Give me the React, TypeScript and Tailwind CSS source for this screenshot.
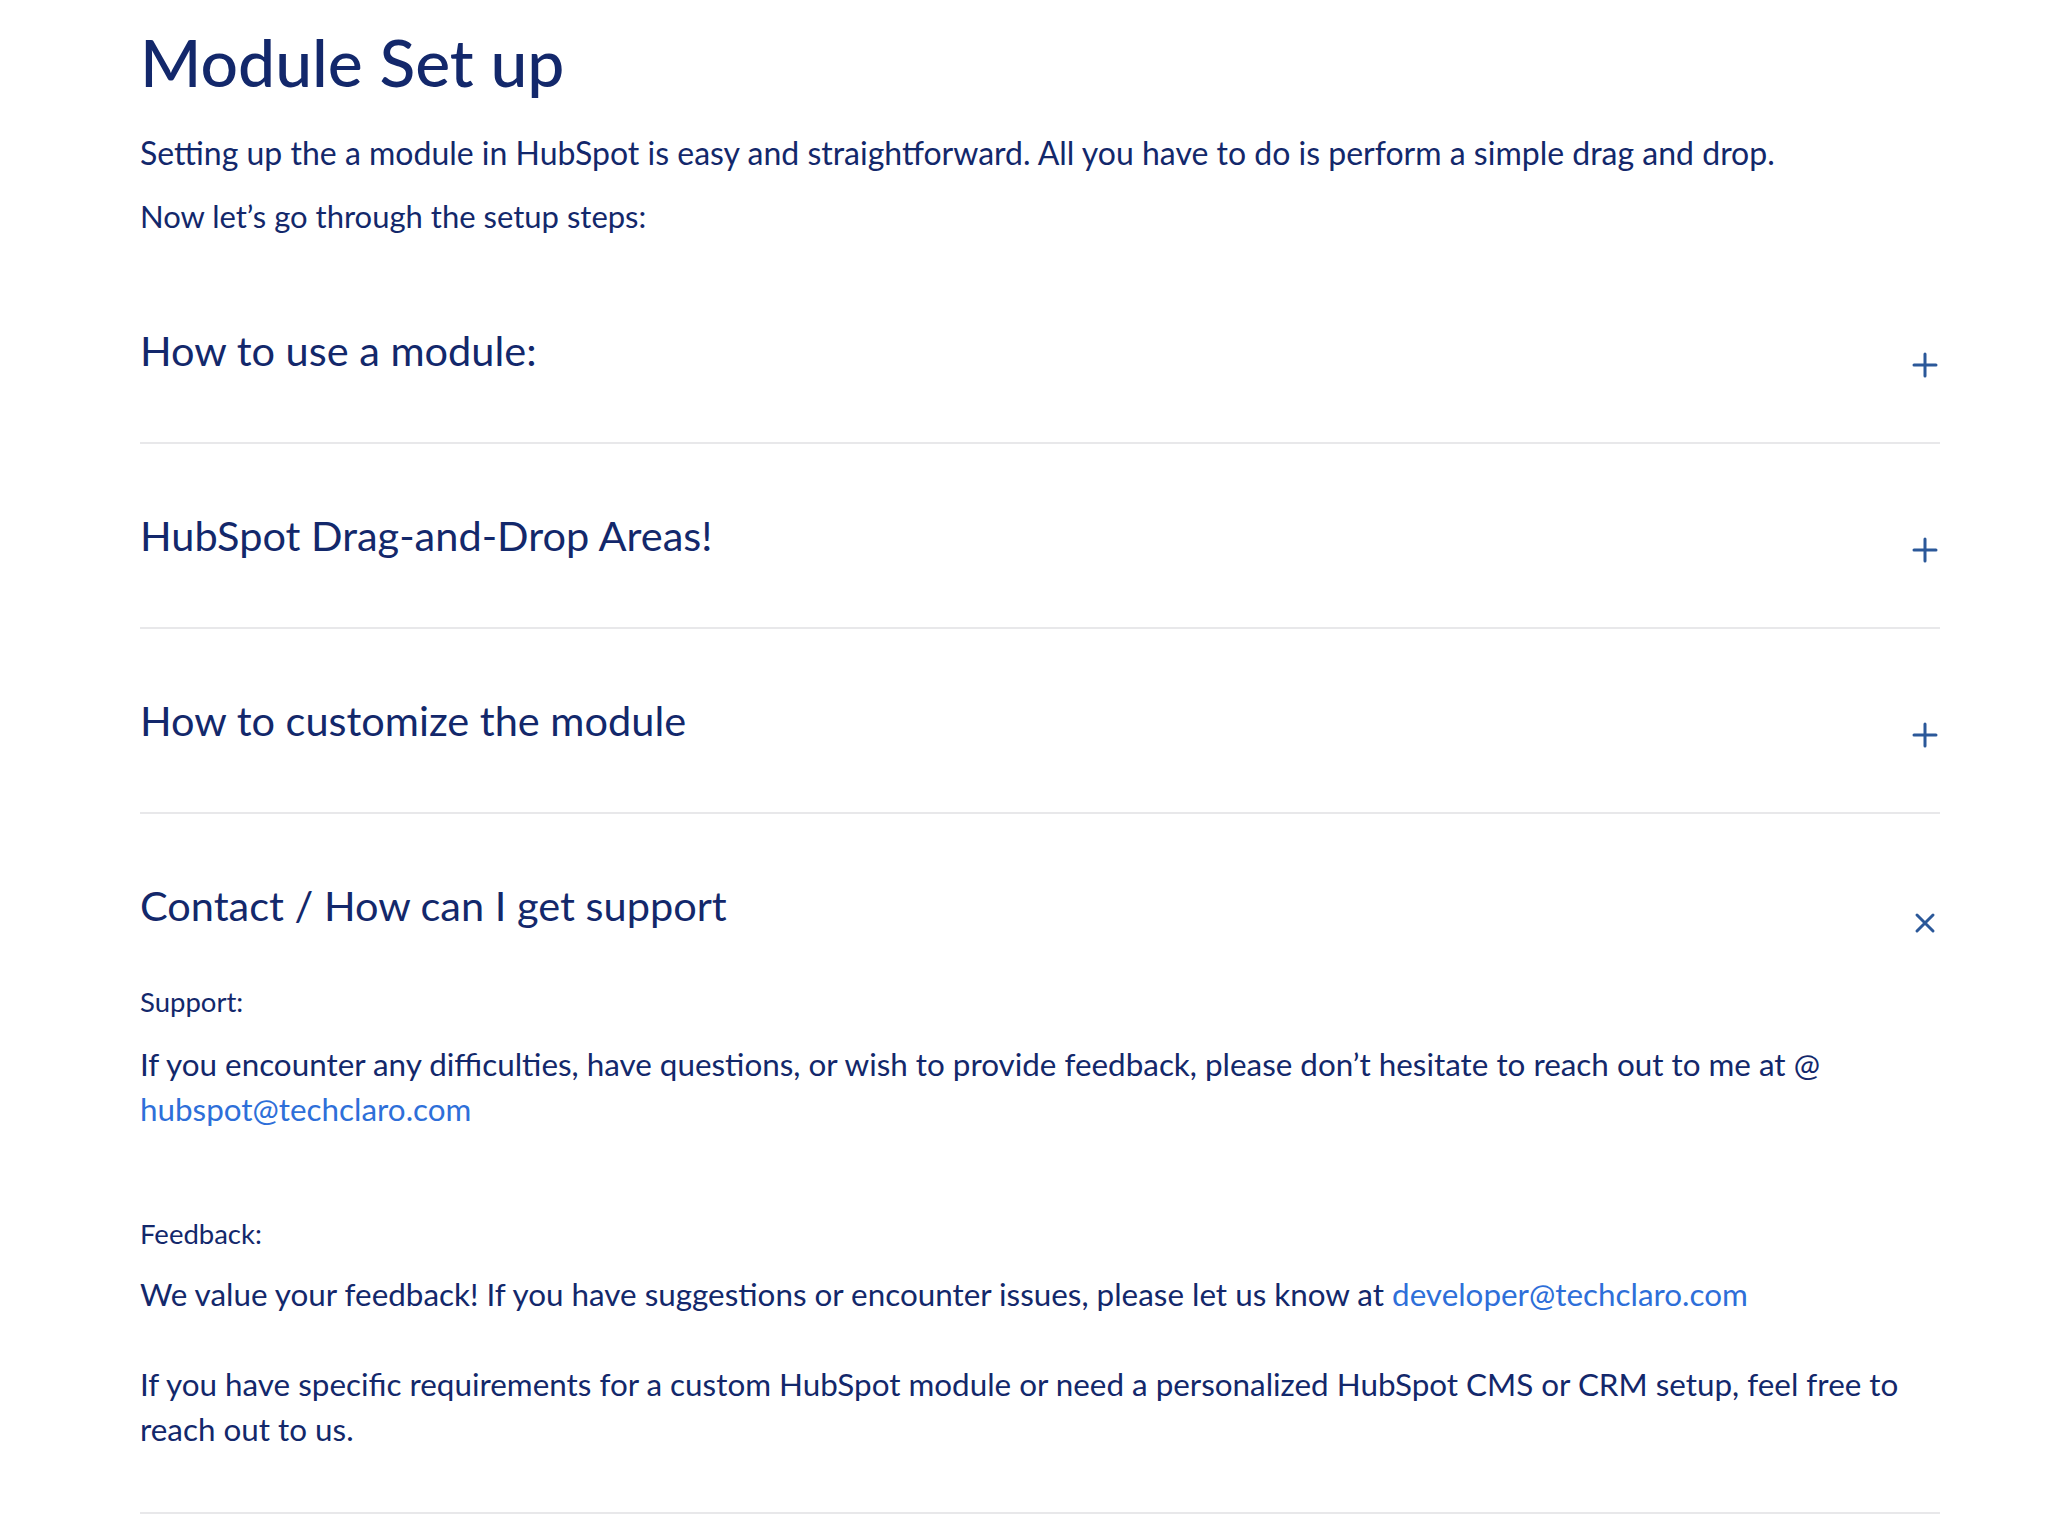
import React, { useState } from 'react';

type Item = {
  title: string;
  body?: React.ReactNode;
};

const font = { fontFamily: 'Lato, "Noto Sans", sans-serif' };

const PlusIcon = () => (
  <svg width="26" height="26" viewBox="0 0 26 26" fill="none" stroke="#2b5899" strokeWidth="3" strokeLinecap="round">
    <path d="M13 2v22M2 13h22" />
  </svg>
);

const CloseIcon = () => (
  <svg width="26" height="26" viewBox="0 0 26 26" fill="none" stroke="#2b5899" strokeWidth="3" strokeLinecap="round">
    <path d="M5 5l16 16M21 5L5 21" />
  </svg>
);

const SupportBody = () => (
  <div className="pb-[60px] text-[31.4px] leading-[45px] text-[#13286b]">
    <p className="mt-[48px] text-[27.5px] leading-[36px]">Support:</p>
    <p className="mt-[22px]">
      If you encounter any difficulties, have questions, or wish to provide feedback, please don’t hesitate to reach out to me at @{' '}
      <a href="#" className="text-[#2e6fd9]">hubspot@techclaro.com</a>
    </p>
    <p className="mt-[84px] text-[27.5px] leading-[36px]">Feedback:</p>
    <p className="mt-[20px]">
      We value your feedback! If you have suggestions or encounter issues, please let us know at{' '}
      <a href="#" className="text-[#2e6fd9]">developer@techclaro.com</a>
    </p>
    <p className="mt-[45px]">
      If you have specific requirements for a custom HubSpot module or need a personalized HubSpot CMS or CRM setup, feel free to reach out to us.
    </p>
  </div>
);

const items: Item[] = [
  { title: 'How to use a module:' },
  { title: 'HubSpot Drag-and-Drop Areas!' },
  { title: 'How to customize the module' },
  { title: 'Contact / How can I get support', body: <SupportBody /> },
];

export default function App() {
  const [open, setOpen] = useState<number | null>(3);

  return (
    <div className="min-h-screen bg-white" style={font}>
      <div className="ml-[140px] w-[1800px]">
        <h1 className="pt-[19px] text-[66px] font-medium leading-[86px] text-[#13286b]">Module Set up</h1>
        <p className="mt-[28px] text-[32px] leading-[40px] text-[#13286b]">
          Setting up the a module in HubSpot is easy and straightforward. All you have to do is perform a simple drag and drop.
        </p>
        <p className="mt-[23px] text-[31px] leading-[40px] text-[#13286b]">Now let’s go through the setup steps:</p>

        <div className="mt-[23px]">
          {items.map((item, i) => (
            <div key={item.title} className="border-b-2 border-[#e8e8ea]">
              <button
                className="flex w-full items-start justify-between pt-[63px] text-left"
                onClick={() => setOpen(open === i ? null : i)}
              >
                <span className="text-[41.5px] leading-[56px] text-[#13286b]">{item.title}</span>
                {open === i ? (
                  <span className="mt-[33px] mr-[2px]"><CloseIcon /></span>
                ) : (
                  <span className="mt-[30px] mr-[2px]"><PlusIcon /></span>
                )}
              </button>
              {open === i && item.body ? item.body : <div className="h-[64px]" />}
            </div>
          ))}
        </div>
      </div>
    </div>
  );
}
